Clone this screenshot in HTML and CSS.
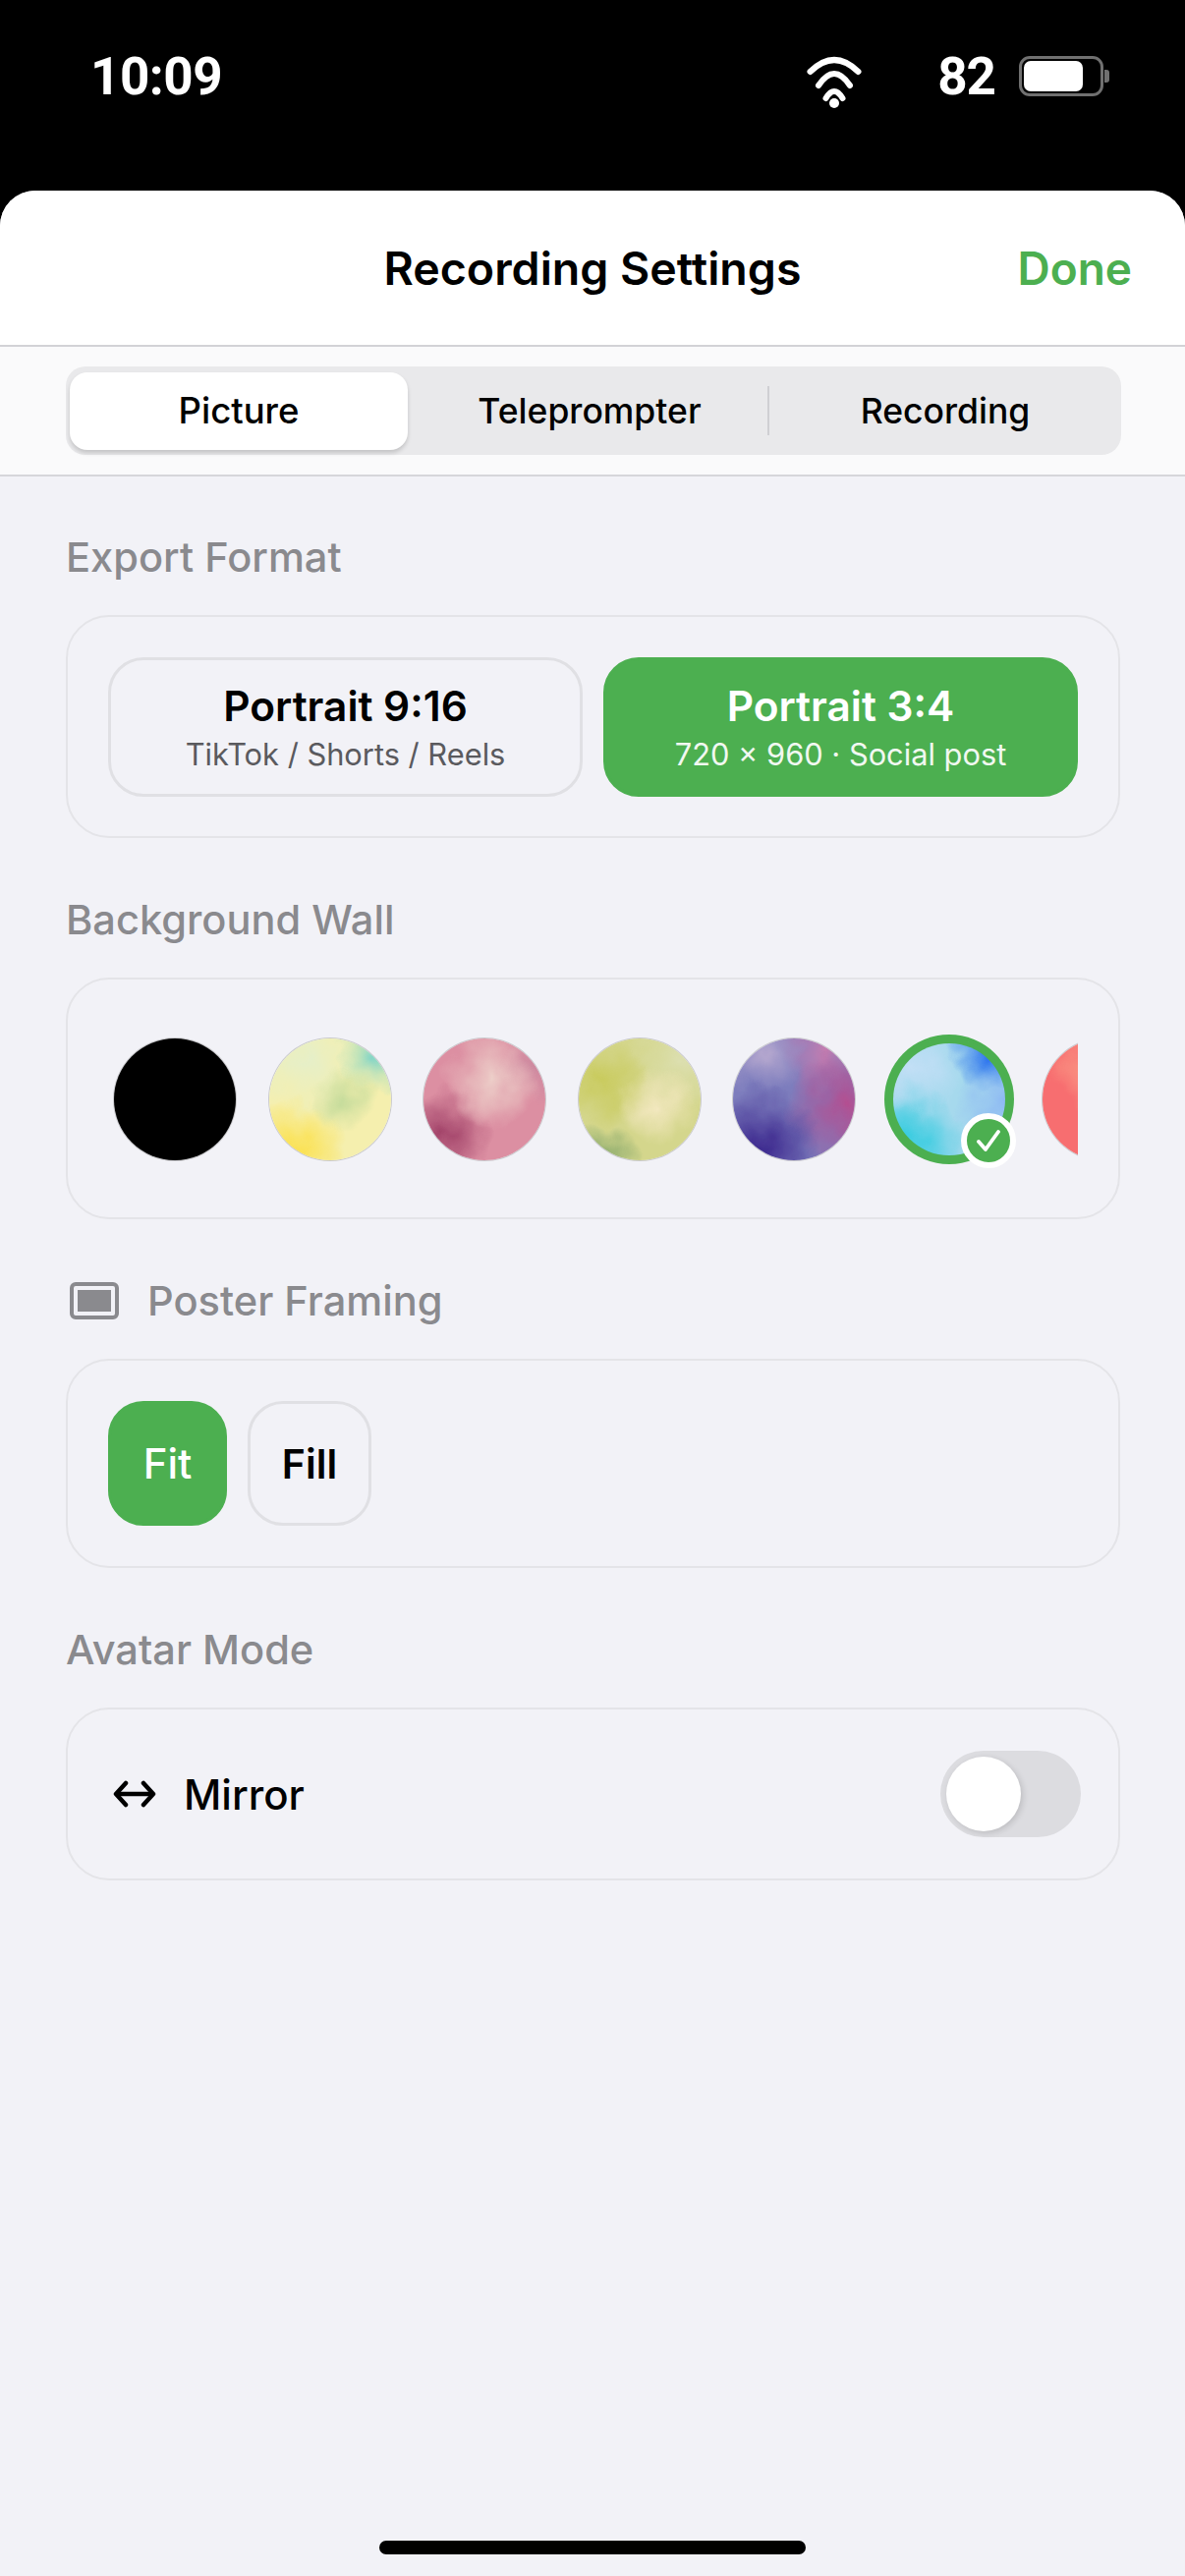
FILE: index.html

```html
<!DOCTYPE html>
<html lang="en">
<head>
  <meta charset="UTF-8" />
  <meta name="viewport" content="width=device-width, initial-scale=1.0"/>
  <title>Recording Settings</title>
  <link rel="stylesheet" href="styles.css">
</head>
<body>
  <svg class="defs" width="0" height="0">
    <filter id="watercolor" x="-10%" y="-10%" width="120%" height="120%">
      <feTurbulence type="fractalNoise" baseFrequency="0.028" numOctaves="3" seed="7" result="noise"/>
      <feDisplacementMap in="SourceGraphic" in2="noise" scale="34" xChannelSelector="R" yChannelSelector="G"/>
    </filter>
  </svg>

  <header class="status-bar">
    <span class="clock">10:09</span>
    <div class="status-right">
      <svg class="wifi" width="56" height="54" viewBox="0 0 56 54">
        <g fill="none" stroke="#fff" stroke-width="6" stroke-linecap="round">
          <path d="M3.5 16Q28 -8 52.5 16"/>
          <path d="M12 30Q28 6 44 30"/>
          <path d="M19.5 43Q28 29 36.5 43"/>
        </g>
        <circle cx="28" cy="48" r="5" fill="#fff"/>
      </svg>
      <span class="battery-level">82</span>
      <div class="battery">
        <div class="battery-body"><div class="battery-fill"></div></div>
        <div class="battery-tip"></div>
      </div>
    </div>
  </header>

  <main class="sheet">
    <div class="nav-bar">
      <span></span>
      <h1 class="nav-title">Recording Settings</h1>
      <a class="nav-done" href="#">Done</a>
    </div>

    <div class="tab-area">
      <div class="segments">
        <div class="segment segment-active">Picture</div>
        <div class="segment segment-middle">Teleprompter</div>
        <div class="segment-divider"></div>
        <div class="segment segment-last">Recording</div>
      </div>
    </div>

    <div class="content">
      <section class="section">
        <h2 class="section-label">Export Format</h2>
        <div class="card format-grid">
          <div class="format">
            <div class="format-name">Portrait 9:16</div>
            <div class="format-sub">TikTok / Shorts / Reels</div>
          </div>
          <div class="format format-active">
            <div class="format-name">Portrait 3:4</div>
            <div class="format-sub">720 × 960 · Social post</div>
          </div>
        </div>
      </section>

      <section class="section">
        <h2 class="section-label">Background Wall</h2>
        <div class="card">
          <div class="swatches">
            <div class="swatch"><div class="swatch-clip paint-black"></div></div>
            <div class="swatch"><div class="swatch-clip"><div class="paint paint-yellow"></div></div></div>
            <div class="swatch"><div class="swatch-clip"><div class="paint paint-pink"></div></div></div>
            <div class="swatch"><div class="swatch-clip"><div class="paint paint-olive"></div></div></div>
            <div class="swatch"><div class="swatch-clip"><div class="paint paint-purple"></div></div></div>
            <div class="swatch swatch-selected">
              <div class="swatch-clip"><div class="paint paint-blue"></div></div>
              <div class="swatch-badge">
                <svg width="28" height="26" viewBox="0 0 28 26">
                  <path d="M4 14L11 22L24 4" fill="none" stroke="#fff" stroke-width="3.8" stroke-linecap="round" stroke-linejoin="round"/>
                </svg>
              </div>
            </div>
            <div class="swatch"><div class="swatch-clip"><div class="paint paint-red"></div></div></div>
          </div>
        </div>
      </section>

      <section class="section">
        <h2 class="section-label section-label-icon">
          <svg width="50" height="38" viewBox="0 0 50 38">
            <rect x="2" y="2" width="46" height="34" rx="4" fill="none" stroke="#8a8a8e" stroke-width="4"/>
            <rect x="8" y="8" width="34" height="22" fill="#8a8a8e"/>
          </svg>
          Poster Framing
        </h2>
        <div class="card framing-row">
          <div class="framing framing-active">Fit</div>
          <div class="framing">Fill</div>
        </div>
      </section>

      <section class="section">
        <h2 class="section-label">Avatar Mode</h2>
        <div class="card mirror-row">
          <svg class="mirror-icon" width="44" height="28" viewBox="0 0 44 28">
            <g fill="none" stroke="#000" stroke-width="4.5" stroke-linecap="round" stroke-linejoin="round">
              <path d="M4 14H40"/>
              <path d="M13 3L3 14L13 25"/>
              <path d="M31 3L41 14L31 25"/>
            </g>
          </svg>
          <span class="mirror-label">Mirror</span>
          <div class="toggle"><div class="toggle-knob"></div></div>
        </div>
      </section>
    </div>

    <div class="home-indicator"></div>
  </main>
</body>
</html>
```

FILE: styles.css

```css
* {
  box-sizing: border-box;
}
html, body {
  margin: 0;
  padding: 0;
}
body {
  width: 1206px;
  height: 2622px;
  overflow: hidden;
  background: #000;
  font-family: Inter, "Liberation Sans", sans-serif;
  color: #000;
}
.defs {
  display: block;
  height: 0;
}

/* status bar */
.status-bar {
  height: 194px;
  display: flex;
  justify-content: space-between;
  align-items: flex-start;
  padding: 50px 77px 0 92px;
  color: #fff;
}
.clock, .battery-level {
  font-family: Roboto, sans-serif;
  font-weight: 700;
  font-size: 53px;
  line-height: 56px;
}
.clock {
  letter-spacing: -0.5px;
}
.status-right {
  display: flex;
  align-items: flex-start;
}
.wifi {
  margin: 7px 77px 0 0;
}
.battery-level {
  letter-spacing: -1px;
}
.battery {
  display: flex;
  align-items: center;
  margin: 7px 0 0 24px;
}
.battery-body {
  width: 86px;
  height: 41px;
  border: 3px solid #707070;
  border-radius: 11px;
  padding: 2px;
}
.battery-fill {
  width: 60px;
  height: 100%;
  background: #fff;
  border-radius: 7px;
}
.battery-tip {
  width: 5px;
  height: 13px;
  margin-left: 1px;
  background: #707070;
  border-radius: 0 3px 3px 0;
}

/* sheet */
.sheet {
  height: 2428px;
  display: flex;
  flex-direction: column;
  background: #f2f2f7;
  border-radius: 36px 36px 0 0;
  overflow: hidden;
}
.nav-bar {
  height: 159px;
  flex-shrink: 0;
  display: grid;
  grid-template-columns: 1fr auto 1fr;
  align-items: center;
  padding: 0 54px;
  background: #fff;
  border-bottom: 2px solid #d2d2d6;
}
.nav-title {
  margin: 0;
  font-size: 46.5px;
  font-weight: 600;
}
.nav-done {
  justify-self: end;
  font-size: 46px;
  font-weight: 600;
  color: #4caf50;
  text-decoration: none;
}

/* tabs */
.tab-area {
  height: 132px;
  flex-shrink: 0;
  padding: 20px 65px 0 67px;
  background: #fafafb;
  border-bottom: 2px solid #d6d6da;
}
.segments {
  height: 90px;
  display: flex;
  align-items: center;
  padding: 0 0 0 4px;
  background: #e9e9eb;
  border-radius: 20px;
}
.segment {
  flex: 1;
  height: 79px;
  display: flex;
  align-items: center;
  justify-content: center;
  font-size: 35.5px;
  font-weight: 500;
}
.segment-active {
  flex: none;
  width: 344px;
  background: #fff;
  border-radius: 18px;
  box-shadow: 0 3px 4px rgba(0, 0, 0, 0.16);
  font-size: 36.5px;
}
.segment-middle {
  padding-left: 4px;
}
.segment-last {
  flex: none;
  width: 358px;
}
.segment-divider {
  width: 2px;
  height: 50px;
  background: #cfcfd3;
}

/* sections */
.content {
  flex: 1;
  padding: 52px 66px 0 67px;
}
.section {
  margin-bottom: 53px;
}
.section-label {
  height: 60px;
  margin: 0 0 29px;
  padding-bottom: 1px;
  display: flex;
  align-items: center;
  font-size: 41.6px;
  font-weight: 500;
  color: #8a8a8e;
}
.section-label-icon {
  gap: 29px;
  padding-left: 4px;
}
.card {
  border: 2px solid #e4e4e8;
  border-radius: 44px;
  padding: 41px;
}

/* export format */
.format-grid {
  display: grid;
  grid-template-columns: 1fr 1fr;
  gap: 21px;
  padding-bottom: 40px;
}
.format {
  height: 142px;
  display: flex;
  flex-direction: column;
  align-items: center;
  justify-content: center;
  gap: 5px;
  border: 3px solid #e0e0e4;
  border-radius: 36px;
}
.format-active {
  background: #4caf50;
  border-color: #4caf50;
  color: #fff;
}
.format-name {
  font-size: 42.4px;
  font-weight: 600;
  line-height: 50px;
}
.format-sub {
  font-size: 30.8px;
  line-height: 38px;
  color: #5a5a5e;
}
.format-active .format-sub {
  color: #f1f8f1;
}

/* background wall */
.swatches {
  display: flex;
  align-items: center;
  gap: 33.5px;
  height: 160px;
  padding: 2px 0 0 6px;
  overflow: hidden;
}
.swatch {
  position: relative;
  flex: none;
  width: 124px;
  height: 124px;
  border-radius: 50%;
}
.swatch-clip {
  position: absolute;
  inset: 0;
  border-radius: 50%;
  overflow: hidden;
  box-shadow: 0 0 0 1px rgba(110, 110, 110, 0.3);
}
.paint-black {
  background: #000;
}
.paint {
  position: absolute;
  inset: -20px;
  filter: url(#watercolor);
}
.swatch-selected {
  background: #4caf50;
  box-shadow: 0 0 0 4px #4caf50;
}
.swatch-selected .swatch-clip {
  inset: 5px;
  box-shadow: none;
}
.swatch-badge {
  position: absolute;
  right: -6px;
  bottom: -8px;
  width: 56px;
  height: 56px;
  display: flex;
  align-items: center;
  justify-content: center;
  background: #4caf50;
  border: 6px solid #fff;
  border-radius: 50%;
}
.paint-yellow {
  background:
    radial-gradient(circle at 82% 22%, #86d6c6 0, rgba(134, 214, 198, 0) 24%),
    radial-gradient(circle at 28% 80%, #fbe14f 0, rgba(251, 225, 79, 0) 30%),
    radial-gradient(circle at 58% 50%, #c6dc9c 0, rgba(198, 220, 156, 0) 26%),
    radial-gradient(circle at 35% 25%, #e6efc8 0, rgba(230, 239, 200, 0) 35%),
    #f5efae;
}
.paint-pink {
  background:
    radial-gradient(circle at 55% 38%, #edcfc9 0, rgba(237, 207, 201, 0) 36%),
    radial-gradient(ellipse at 25% 70%, #a3446a 0, rgba(163, 68, 106, 0) 28%),
    radial-gradient(circle at 85% 30%, #cd8aa0 0, rgba(205, 138, 160, 0) 24%),
    #dc8fa2;
}
.paint-olive {
  background:
    radial-gradient(circle at 60% 55%, #f3e8c0 0, rgba(243, 232, 192, 0) 30%),
    radial-gradient(circle at 25% 88%, #6f9a60 0, rgba(111, 154, 96, 0) 20%),
    radial-gradient(circle at 28% 40%, #c9cb5e 0, rgba(201, 203, 94, 0) 30%),
    radial-gradient(circle at 80% 25%, #dcdfb0 0, rgba(220, 223, 176, 0) 32%),
    #d4d68c;
}
.paint-purple {
  background:
    radial-gradient(circle at 30% 78%, #3f2c90 0, rgba(63, 44, 144, 0) 36%),
    radial-gradient(circle at 32% 20%, #b3a6ce 0, rgba(179, 166, 206, 0) 24%),
    radial-gradient(circle at 82% 55%, #b44e90 0, rgba(180, 78, 144, 0) 38%),
    radial-gradient(circle at 70% 20%, #c47db0 0, rgba(196, 125, 176, 0) 28%),
    #7d7dbd;
}
.paint-blue {
  background:
    radial-gradient(circle at 78% 20%, #2069ee 0, rgba(32, 105, 238, 0) 24%),
    radial-gradient(circle at 28% 28%, #c3dff6 0, rgba(195, 223, 246, 0) 30%),
    radial-gradient(circle at 22% 78%, #2dcbdf 0, rgba(45, 203, 223, 0) 36%),
    radial-gradient(circle at 85% 55%, #8db8f3 0, rgba(141, 184, 243, 0) 30%),
    #a6d9ed;
}
.paint-red {
  background:
    radial-gradient(circle at 45% 30%, #fb9f88 0, rgba(251, 159, 136, 0) 30%),
    #f76e70;
}

/* poster framing */
.framing-row {
  display: flex;
  gap: 21px;
}
.framing {
  width: 126px;
  height: 127px;
  display: flex;
  align-items: center;
  justify-content: center;
  border: 3px solid #e0e0e4;
  border-radius: 36px;
  font-size: 41px;
  font-weight: 600;
}
.framing-active {
  width: 121px;
  background: #4caf50;
  border-color: #4caf50;
  color: #fff;
  font-size: 42px;
  font-weight: 500;
}

/* avatar mode */
.mirror-row {
  display: flex;
  align-items: center;
  padding: 42px 38px 42px 46px;
}
.mirror-label {
  margin-left: 28px;
  font-size: 42px;
  font-weight: 500;
}
.toggle {
  margin-left: auto;
  width: 143px;
  height: 88px;
  padding: 6px 0 0 6px;
  background: #dcdce0;
  border-radius: 44px;
}
.toggle-knob {
  width: 76px;
  height: 76px;
  background: #fff;
  border-radius: 50%;
  box-shadow: 2px 2px 6px rgba(0, 0, 0, 0.14);
}

.home-indicator {
  flex-shrink: 0;
  width: 434px;
  height: 14px;
  margin: 0 auto 22px;
  background: #000;
  border-radius: 7px;
}
```
